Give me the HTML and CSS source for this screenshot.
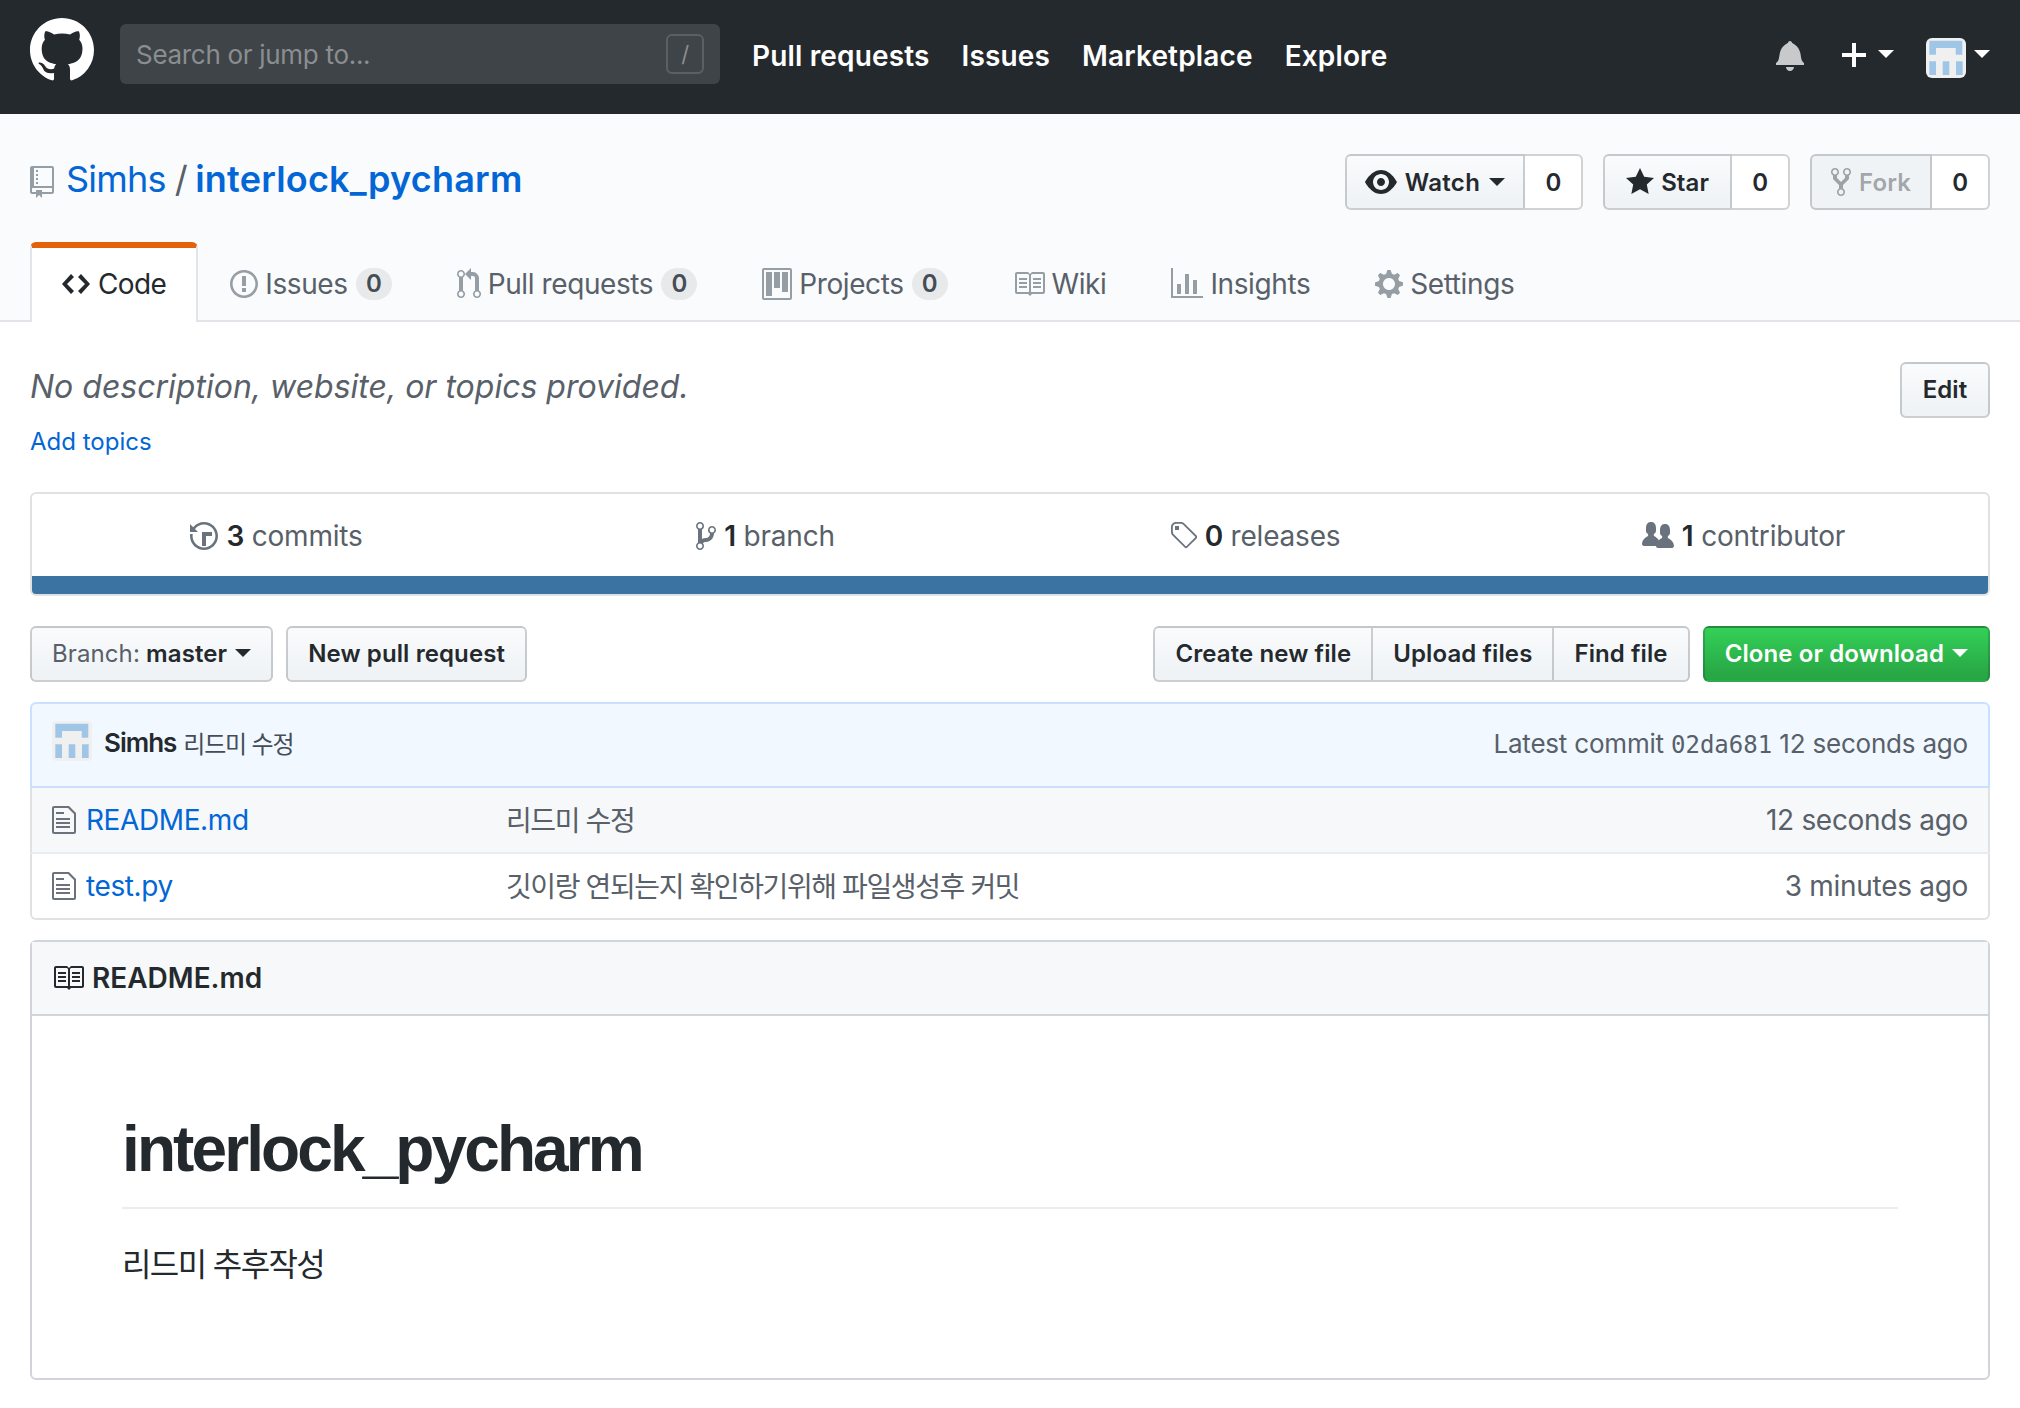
FILE: index.html
```html
<!DOCTYPE html>
<html lang="en">
<head>
    <meta charset="UTF-8">
    <meta name="viewport" content="width=device-width, initial-scale=1.0">
    <title>Simhs/interlock_pycharm</title>
    <link rel="stylesheet" href="styles.css">
</head>
<body>
    <svg class="sprite" xmlns="http://www.w3.org/2000/svg">
        <symbol id="i-mark" viewBox="0 0 16 16"><path d="M8 0C3.58 0 0 3.58 0 8c0 3.54 2.29 6.53 5.47 7.59.4.07.55-.17.55-.38 0-.19-.01-.82-.01-1.49-2.01.37-2.53-.49-2.69-.94-.09-.23-.48-.94-.82-1.13-.28-.15-.68-.52-.01-.53.63-.01 1.08.58 1.23.82.72 1.21 1.87.87 2.33.66.07-.52.28-.87.51-1.07-1.78-.2-3.64-.89-3.64-3.95 0-.87.31-1.59.82-2.15-.08-.2-.36-1.02.08-2.12 0 0 .67-.21 2.2.82.64-.18 1.32-.27 2-.27.68 0 1.36.09 2 .27 1.53-1.04 2.2-.82 2.2-.82.44 1.1.16 1.92.08 2.12.51.56.82 1.27.82 2.15 0 3.07-1.87 3.75-3.65 3.95.29.25.54.73.54 1.48 0 1.07-.01 1.93-.01 2.2 0 .21.15.46.55.38A8.013 8.013 0 0016 8c0-4.42-3.58-8-8-8z"/></symbol>
        <symbol id="i-repo" viewBox="0 0 12 16"><path d="M4 9H3V8h1v1zm0-3H3v1h1V6zm0-2H3v1h1V4zm0-2H3v1h1V2zm8-1v12c0 .55-.45 1-1 1H6v2l-1.5-1.5L3 16v-2H1c-.55 0-1-.45-1-1V1c0-.55.45-1 1-1h10c.55 0 1 .45 1 1zm-1 10H1v2h2v-1h3v1h5v-2zm0-10H2v9h9V1z"/></symbol>
        <symbol id="i-eye" viewBox="0 0 16 16"><path d="M8.06 2C3 2 0 8 0 8s3 6 8.06 6C13 14 16 8 16 8s-3-6-7.94-6zM8 12c-2.2 0-4-1.78-4-4 0-2.2 1.8-4 4-4 2.22 0 4 1.8 4 4 0 2.22-1.78 4-4 4zm2-4c0 1.11-.89 2-2 2-1.11 0-2-.89-2-2 0-1.11.89-2 2-2 1.11 0 2 .89 2 2z"/></symbol>
        <symbol id="i-star" viewBox="0 0 14 16"><path d="M14 6l-4.9-.64L7 1 4.9 5.36 0 6l3.6 3.26L2.67 14 7 11.67 11.33 14l-.93-4.74L14 6z"/></symbol>
        <symbol id="i-fork" viewBox="0 0 10 16"><path d="M8 1a1.993 1.993 0 00-1 3.72V6L5 8 3 6V4.72A1.993 1.993 0 002 1a1.993 1.993 0 00-1 3.72V6.5l3 3v1.78A1.993 1.993 0 005 15a1.993 1.993 0 001-3.72V9.5l3-3V4.72A1.993 1.993 0 008 1zM2 4.2C1.34 4.2.8 3.65.8 3c0-.65.55-1.2 1.2-1.2.65 0 1.2.55 1.2 1.2 0 .65-.55 1.2-1.2 1.2zm3 10c-.66 0-1.2-.55-1.2-1.2 0-.65.55-1.2 1.2-1.2.65 0 1.2.55 1.2 1.2 0 .65-.55 1.2-1.2 1.2zm3-10c-.66 0-1.2-.55-1.2-1.2 0-.65.55-1.2 1.2-1.2.65 0 1.2.55 1.2 1.2 0 .65-.55 1.2-1.2 1.2z"/></symbol>
        <symbol id="i-code" viewBox="0 0 14 16"><path d="M9.5 3L8 4.5 11.5 8 8 11.5 9.5 13 14 8 9.5 3zm-5 0L0 8l4.5 5L6 11.5 2.5 8 6 4.5 4.5 3z"/></symbol>
        <symbol id="i-issue" viewBox="0 0 14 16"><path d="M7 2.3c3.14 0 5.7 2.56 5.7 5.7s-2.56 5.7-5.7 5.7A5.71 5.71 0 011.3 8c0-3.14 2.56-5.7 5.7-5.7zM7 1C3.14 1 0 4.14 0 8s3.14 7 7 7 7-3.14 7-7-3.14-7-7-7zm1 3H6v5h2V4zm0 6H6v2h2v-2z"/></symbol>
        <symbol id="i-pr" viewBox="0 0 12 16"><path d="M11 11.28V5c-.03-.78-.34-1.47-.94-2.06C9.46 2.35 8.78 2.03 8 2H7V0L4 3l3 3V4h1c.27.02.48.11.69.31.21.2.3.42.31.69v6.28A1.993 1.993 0 0010 15a1.993 1.993 0 001-3.72zm-1 2.92c-.66 0-1.2-.55-1.2-1.2 0-.65.55-1.2 1.2-1.2.65 0 1.2.55 1.2 1.2 0 .65-.55 1.2-1.2 1.2zM4 3c0-1.11-.89-2-2-2a1.993 1.993 0 00-1 3.72v6.56A1.993 1.993 0 002 15a1.993 1.993 0 001-3.72V4.72c.59-.34 1-.98 1-1.72zm-.8 10c0 .66-.55 1.2-1.2 1.2-.65 0-1.2-.55-1.2-1.2 0-.65.55-1.2 1.2-1.2.65 0 1.2.55 1.2 1.2zM2 4.2C1.34 4.2.8 3.65.8 3c0-.65.55-1.2 1.2-1.2.65 0 1.2.55 1.2 1.2 0 .65-.55 1.2-1.2 1.2z"/></symbol>
        <symbol id="i-project" viewBox="0 0 15 16"><path fill-rule="evenodd" d="M10 12h3V2h-3v10zm-4-2h3V2H6v8zm-4 4h3V2H2v12zm-1 1h13V1H1v14zM14 0H1a1 1 0 00-1 1v14a1 1 0 001 1h13a1 1 0 001-1V1a1 1 0 00-1-1z"/></symbol>
        <symbol id="i-book" viewBox="0 0 16 16"><path d="M3 5h4v1H3V5zm0 3h4V7H3v1zm0 2h4V9H3v1zm11-5h-4v1h4V5zm0 2h-4v1h4V7zm0 2h-4v1h4V9zm2-6v9c0 .55-.45 1-1 1H9.5l-1 1-1-1H2c-.55 0-1-.45-1-1V3c0-.55.45-1 1-1h5.5l1 1 1-1H15c.55 0 1 .45 1 1zm-8 .5L7.5 3H2v9h6V3.5zm7-.5H9.5l-.5.5V12h6V3z"/></symbol>
        <symbol id="i-graph" viewBox="0 0 16 16"><path d="M16 14v1H0V0h1v14h15zM5 13H3V8h2v5zm4 0H7V3h2v10zm4 0h-2V6h2v7z"/></symbol>
        <symbol id="i-gear" viewBox="0 0 14 16"><path d="M14 8.77v-1.6l-1.94-.64-.45-1.09.88-1.84-1.13-1.13-1.81.91-1.09-.45-.69-1.92h-1.6l-.63 1.94-1.11.45-1.84-.88-1.13 1.13.91 1.81-.45 1.09L0 7.23v1.59l1.94.64.45 1.09-.88 1.84 1.13 1.13 1.81-.91 1.09.45.69 1.92h1.59l.63-1.94 1.11-.45 1.84.88 1.13-1.13-.92-1.81.47-1.09L14 8.75v.02zM7 11c-1.66 0-3-1.34-3-3s1.34-3 3-3 3 1.34 3 3-1.34 3-3 3z"/></symbol>
        <symbol id="i-history" viewBox="0 0 14 16"><path d="M8 13H6V6h5v2H8v5zM7 1C4.81 1 2.87 2.02 1.59 3.59L0 2v4h4L2.5 4.5C3.55 3.17 5.17 2.3 7 2.3c3.14 0 5.7 2.56 5.7 5.7s-2.56 5.7-5.7 5.7A5.71 5.71 0 011.3 8c0-.34.03-.67.09-1H.08C.03 7.33 0 7.66 0 8c0 3.86 3.14 7 7 7s7-3.14 7-7-3.14-7-7-7z"/></symbol>
        <symbol id="i-branch" viewBox="0 0 10 16"><path d="M10 5c0-1.11-.89-2-2-2a1.993 1.993 0 00-1 3.72v.3c-.02.52-.23.98-.63 1.38-.4.4-.86.61-1.38.63-.83.02-1.48.16-2 .45V4.72a1.993 1.993 0 00-1-3.72C.88 1 0 1.89 0 3a2 2 0 001 1.72v6.56c-.59.35-1 .99-1 1.72 0 1.11.89 2 2 2 1.11 0 2-.89 2-2 0-.53-.2-1-.53-1.36.09-.06.48-.41.59-.47.25-.11.56-.17.94-.17 1.05-.05 1.95-.45 2.75-1.25S8.95 7.77 9 6.73h-.02C9.59 6.37 10 5.73 10 5zM2 1.8c.66 0 1.2.55 1.2 1.2 0 .65-.55 1.2-1.2 1.2C1.35 4.2.8 3.65.8 3c0-.65.55-1.2 1.2-1.2zm0 12.41c-.66 0-1.2-.55-1.2-1.2 0-.65.55-1.2 1.2-1.2.65 0 1.2.55 1.2 1.2 0 .65-.55 1.2-1.2 1.2zm6-8c-.66 0-1.2-.55-1.2-1.2 0-.65.55-1.2 1.2-1.2.65 0 1.2.55 1.2 1.2 0 .65-.55 1.2-1.2 1.2z"/></symbol>
        <symbol id="i-tag" viewBox="0 0 14 16"><path d="M7.73 1.73C7.26 1.26 6.62 1 5.96 1H3.5C2.13 1 1 2.13 1 3.5v2.47c0 .66.27 1.3.73 1.77l6.06 6.06c.39.39 1.02.39 1.41 0l4.59-4.59a.996.996 0 000-1.41L7.73 1.73zM2.38 7.09c-.31-.3-.47-.7-.47-1.13V3.5c0-.88.72-1.59 1.59-1.59h2.47c.42 0 .83.16 1.13.47l6.14 6.13-4.73 4.73-6.13-6.15zM3.01 3h2v2H3V3h.01z"/></symbol>
        <symbol id="i-org" viewBox="0 0 16 16"><path d="M16 12.999c0 .439-.45 1-1 1H7.995c-.539 0-.994-.447-.995-.999H1c-.54 0-1-.561-1-1 0-2.634 3-4 3-4s.229-.409 0-1c-.841-.621-1.058-.59-1-3 .058-2.419 1.367-3 2.5-3s2.442.58 2.5 3c.058 2.41-.159 2.379-1 3-.229.59 0 1 0 1s1.549.711 2.42 2.088C9.196 9.369 10 8.999 10 8.999s.229-.409 0-1c-.841-.62-1.058-.59-1-3 .058-2.419 1.367-3 2.5-3s2.437.581 2.495 3c.059 2.41-.158 2.38-1 3-.229.59 0 1 0 1s3.005 1.366 3.005 4z"/></symbol>
        <symbol id="i-file" viewBox="0 0 12 16"><path d="M6 5H2V4h4v1zM2 8h7V7H2v1zm0 2h7V9H2v1zm0 2h7v-1H2v1zm10-7.5V14c0 .55-.45 1-1 1H1c-.55 0-1-.45-1-1V2c0-.55.45-1 1-1h7.5L12 4.5zM11 5L8 2H1v12h10V5z"/></symbol>
        <symbol id="i-bell" viewBox="0 0 14 16"><path d="M14 12v1H0v-1l.73-.58c.77-.77.81-2.55 1.19-4.42C2.69 3.23 6 2 6 2c0-.55.45-1 1-1s1 .45 1 1c0 0 3.39 1.23 4.16 5 .38 1.88.42 3.66 1.19 4.42l.66.58H14zm-7 4c1.11 0 2-.89 2-2H5c0 1.11.89 2 2 2z"/></symbol>
        <symbol id="i-plus" viewBox="0 0 12 16"><path d="M12 9H7v5H5V9H0V7h5V2h2v5h5v2z"/></symbol>
        <symbol id="i-avatar" viewBox="0 0 40 40">
            <rect width="40" height="40" fill="#f0f0f0"/>
            <path fill="#9fc6e7" d="M3.3 2.7h33v14h-6.6V10H10v6.7H3.3zM3.3 23.3H10V37H3.3zM16.7 23.3h6.6V37h-6.6zM30 23.3h6.7V37H30z"/>
        </symbol>
    </svg>

    <header class="topbar">
        <svg class="logo"><use href="#i-mark"/></svg>
        <div class="search">
            <span class="search-hint">Search or jump to...</span>
            <span class="slash">/</span>
        </div>
        <nav class="topnav">
            <a href="#">Pull requests</a>
            <a href="#">Issues</a>
            <a href="#">Marketplace</a>
            <a href="#">Explore</a>
        </nav>
        <div class="topright">
            <svg class="bell"><use href="#i-bell"/></svg>
            <svg class="plus"><use href="#i-plus"/></svg>
            <span class="caret caret-white plus-caret"></span>
            <svg class="avatar"><use href="#i-avatar"/></svg>
            <span class="caret caret-white avatar-caret"></span>
        </div>
    </header>

    <section class="repohead">
        <div class="repo-row">
            <h1 class="repo-title">
                <svg class="ic-repo"><use href="#i-repo"/></svg>
                <a href="#" class="repo-owner">Simhs</a>
                <span class="sep">/</span>
                <a href="#" class="repo-name">interlock_pycharm</a>
            </h1>
            <div class="actions">
                <div class="social">
                    <a class="social-btn" href="#"><svg class="ic-eye"><use href="#i-eye"/></svg>Watch<span class="caret"></span></a>
                    <span class="social-count">0</span>
                </div>
                <div class="social">
                    <a class="social-btn star-btn" href="#"><svg class="ic-star"><use href="#i-star"/></svg>Star</a>
                    <span class="social-count">0</span>
                </div>
                <div class="social">
                    <a class="social-btn is-disabled" href="#"><svg class="ic-fork"><use href="#i-fork"/></svg>Fork</a>
                    <span class="social-count">0</span>
                </div>
            </div>
        </div>
        <nav class="tabs">
            <a class="tab is-selected" href="#"><svg class="ic-code"><use href="#i-code"/></svg>Code</a>
            <a class="tab" href="#"><svg class="ic-14"><use href="#i-issue"/></svg>Issues<span class="counter">0</span></a>
            <a class="tab" href="#"><svg class="ic-12"><use href="#i-pr"/></svg>Pull requests<span class="counter">0</span></a>
            <a class="tab" href="#"><svg class="ic-15"><use href="#i-project"/></svg>Projects<span class="counter">0</span></a>
            <a class="tab" href="#"><svg class="ic-16"><use href="#i-book"/></svg>Wiki</a>
            <a class="tab" href="#"><svg class="ic-16"><use href="#i-graph"/></svg>Insights</a>
            <a class="tab" href="#"><svg class="ic-14"><use href="#i-gear"/></svg>Settings</a>
        </nav>
    </section>

    <main class="container">
        <div class="about">
            <em class="description">No description, website, or topics provided.</em>
            <a class="btn btn-edit" href="#">Edit</a>
        </div>
        <a class="add-topics" href="#">Add topics</a>

        <div class="numbers">
            <ul class="summary">
                <li><svg class="ic-14"><use href="#i-history"/></svg><span><b>3</b> commits</span></li>
                <li><svg class="ic-10"><use href="#i-branch"/></svg><span><b>1</b> branch</span></li>
                <li><svg class="ic-14"><use href="#i-tag"/></svg><span><b>0</b> releases</span></li>
                <li><svg class="ic-16"><use href="#i-org"/></svg><span><b>1</b> contributor</span></li>
            </ul>
            <div class="langbar"></div>
        </div>

        <div class="filenav">
            <a class="btn" href="#"><span class="muted">Branch:</span>&nbsp;master<span class="caret"></span></a>
            <a class="btn" href="#">New pull request</a>
            <div class="filenav-right">
                <div class="btn-group">
                    <a class="btn" href="#">Create new file</a>
                    <a class="btn" href="#">Upload files</a>
                    <a class="btn" href="#">Find file</a>
                </div>
                <a class="btn btn-green" href="#">Clone or download<span class="caret caret-white"></span></a>
            </div>
        </div>

        <div class="files">
            <div class="tease">
                <svg class="tease-avatar"><use href="#i-avatar"/></svg>
                <b>Simhs</b>
                <span class="tease-msg">리드미 수정</span>
                <span class="tease-right">Latest commit <code>02da681</code> 12 seconds ago</span>
            </div>
            <div class="file-row shaded">
                <svg class="ic-file"><use href="#i-file"/></svg>
                <a class="file-name" href="#">README.md</a>
                <span class="file-msg">리드미 수정</span>
                <span class="file-age">12 seconds ago</span>
            </div>
            <div class="file-row">
                <svg class="ic-file"><use href="#i-file"/></svg>
                <a class="file-name" href="#">test.py</a>
                <span class="file-msg">깃이랑 연되는지 확인하기위해 파일생성후 커밋</span>
                <span class="file-age">3 minutes ago</span>
            </div>
        </div>

        <article class="readme">
            <h3 class="readme-head"><svg class="ic-16"><use href="#i-book"/></svg>README.md</h3>
            <div class="readme-body">
                <h1>interlock_pycharm</h1>
                <p>리드미 추후작성</p>
            </div>
        </article>
    </main>
</body>
</html>
```

FILE: styles.css
```css
* {
    box-sizing: border-box;
}

body {
    margin: 0;
    background: #fff;
    color: #24292e;
    font-family: Inter, "Noto Sans CJK KR", sans-serif;
    font-size: 28px;
    letter-spacing: -0.4px;
}

a {
    color: #0366d6;
    text-decoration: none;
}

svg {
    fill: currentColor;
    flex: none;
}

.sprite {
    display: none;
}

.caret {
    display: inline-block;
    width: 0;
    height: 0;
    margin-left: 10px;
    border-style: solid;
    border-width: 8px 8px 0;
    border-color: #24292e transparent transparent;
}

.caret-white {
    border-top-color: #fff;
}

/* top bar */
.topbar {
    display: flex;
    align-items: center;
    height: 114px;
    padding: 0 30px 6px;
    background: #24292e;
}

.logo {
    width: 64px;
    height: 64px;
    margin-top: -8px;
    color: #fff;
}

.search {
    display: flex;
    align-items: center;
    justify-content: space-between;
    width: 600px;
    height: 60px;
    margin-left: 26px;
    padding: 0 16px;
    border-radius: 6px;
    background: #3f4448;
    color: #8b8e90;
}

.search-hint {
    font-size: 26px;
    letter-spacing: -0.3px;
}

.slash {
    width: 38px;
    height: 40px;
    border: 2px solid #5c6064;
    border-radius: 6px;
    color: #8b8e90;
    font-size: 22px;
    line-height: 36px;
    text-align: center;
}

.topnav {
    display: flex;
    gap: 32px;
    margin-top: 4px;
    margin-left: 32px;
}

.topnav a {
    color: #fff;
    font-weight: 600;
    letter-spacing: 0.15px;
}

.topright {
    display: flex;
    align-items: center;
    margin-top: 8px;
    margin-left: auto;
}

.bell {
    width: 28px;
    height: 32px;
    margin-top: -6px;
    color: #c8c9cb;
}

.plus {
    width: 24px;
    height: 32px;
    margin-top: -6px;
    margin-left: 38px;
    color: #fff;
}

.plus-caret {
    margin-top: -8px;
    margin-left: 12px;
}

.avatar {
    width: 40px;
    height: 40px;
    margin-left: 32px;
    border-radius: 6px;
}

.avatar-caret {
    margin-top: -8px;
    margin-left: 8px;
}

/* repo head */
.repohead {
    padding-top: 40px;
    background: #fafbfc;
}

.repo-row {
    display: flex;
    align-items: center;
    justify-content: space-between;
    height: 56px;
    padding: 0 30px;
}

.repo-title {
    display: flex;
    align-items: center;
    margin: -6px 0 0;
    font-size: 36px;
    font-weight: 400;
}

.ic-repo {
    width: 24px;
    height: 32px;
    margin-top: 6px;
    margin-right: 12px;
    color: #959da5;
}

.repo-owner {
    letter-spacing: -0.8px;
}

.sep {
    margin: 0 8px 0 9px;
    color: #586069;
}

.repo-name {
    font-weight: 600;
    letter-spacing: 0.2px;
}

.actions {
    display: flex;
    gap: 20px;
}

.social {
    display: flex;
    height: 56px;
    font-size: 24px;
    font-weight: 600;
}

.social-btn {
    display: flex;
    align-items: center;
    padding: 0 18px;
    border: 2px solid rgba(27, 31, 35, .2);
    border-radius: 6px 0 0 6px;
    background: linear-gradient(#fafbfc, #eff3f6 90%);
    color: #24292e;
    letter-spacing: 0.3px;
}

.star-btn {
    padding: 0 21px;
    letter-spacing: 0.1px;
}

.is-disabled {
    padding: 0 19px;
    background: #eff3f6;
    color: rgba(36, 41, 46, .4);
    letter-spacing: 0.1px;
}

.social-count {
    display: flex;
    align-items: center;
    justify-content: center;
    width: 58px;
    border: 2px solid rgba(27, 31, 35, .2);
    border-left: 0;
    border-radius: 0 6px 6px 0;
    background: #fff;
}

.ic-eye {
    width: 32px;
    height: 32px;
    margin-right: 8px;
}

.ic-star {
    width: 28px;
    height: 32px;
    margin-right: 7px;
}

.ic-fork {
    width: 20px;
    height: 32px;
    margin-right: 8px;
}

.social-btn .caret {
    margin-left: 9px;
}

.tabs {
    display: flex;
    height: 80px;
    margin-top: 32px;
    padding: 0 30px;
    border-bottom: 2px solid #e1e4e8;
}

.tab {
    display: flex;
    align-items: center;
    gap: 7px;
    height: 80px;
    padding: 4px 33px 0 32px;
    color: #586069;
}

.tab svg {
    color: #959da5;
}

.tab.is-selected {
    gap: 8px;
    padding: 0 30px 2px;
    border: 2px solid #e1e4e8;
    border-top: 6px solid #e36209;
    border-bottom: 0;
    border-radius: 6px 6px 0 0;
    background: #fff;
    color: #24292e;
    letter-spacing: -0.6px;
}

.tab.is-selected svg {
    color: #24292e;
}

.ic-code, .ic-14 {
    width: 28px;
    height: 32px;
}

.ic-10 {
    width: 20px;
    height: 32px;
}

.ic-12 {
    width: 24px;
    height: 32px;
}

.ic-15 {
    width: 30px;
    height: 32px;
}

.ic-16 {
    width: 32px;
    height: 32px;
}

.counter {
    min-width: 36px;
    height: 32px;
    margin-left: 1px;
    border-radius: 40px;
    background: rgba(27, 31, 35, .08);
    color: #444d56;
    font-size: 24px;
    font-weight: 600;
    line-height: 32px;
    text-align: center;
}

/* main column */
.container {
    padding: 0 30px 28px;
}

.about {
    display: flex;
    align-items: center;
    justify-content: space-between;
    height: 56px;
    margin-top: 40px;
}

.description {
    margin-bottom: 8px;
    color: #586069;
    font-size: 32px;
    letter-spacing: 0;
}

.add-topics {
    display: block;
    margin-top: 7px;
    margin-bottom: -1px;
    font-size: 24px;
    line-height: 34px;
    letter-spacing: 0;
}

.btn {
    display: inline-flex;
    align-items: center;
    height: 56px;
    padding: 0 20px 2px;
    border: 2px solid rgba(27, 31, 35, .2);
    border-radius: 6px;
    background: linear-gradient(#fafbfc, #eff3f6 90%);
    color: #24292e;
    font-size: 24px;
    font-weight: 600;
    letter-spacing: 0.1px;
}

.btn .caret {
    margin-left: 8px;
}

.btn-edit {
    width: 90px;
    justify-content: center;
    padding: 0 0 2px;
}

.numbers {
    margin-top: 34px;
    border: 2px solid #dfe2e5;
    border-radius: 6px;
    overflow: hidden;
}

.summary {
    display: grid;
    grid-template-columns: repeat(4, 1fr);
    height: 82px;
    margin: 0;
    padding: 2px 0 0;
    list-style: none;
    color: #586069;
    letter-spacing: -0.2px;
}

.summary li {
    display: flex;
    align-items: center;
    justify-content: center;
    gap: 8px;
}

.summary svg {
    color: #6a737d;
}

.summary b {
    color: #24292e;
    font-weight: 600;
}

.langbar {
    height: 18px;
    background: #3b73a3;
}

.filenav {
    display: flex;
    gap: 13px;
    margin-top: 30px;
}

.muted {
    color: #586069;
    font-weight: 400;
}

.filenav-right {
    display: flex;
    gap: 13px;
    margin-left: auto;
}

.btn-group {
    display: flex;
}

.btn-group .btn {
    border-radius: 0;
    margin-left: -2px;
}

.btn-group .btn:first-child {
    border-radius: 6px 0 0 6px;
    margin-left: 0;
}

.btn-group .btn:last-child {
    border-radius: 0 6px 6px 0;
}

.btn-green {
    background: linear-gradient(#34d058, #28a745 90%);
    color: #fff;
}

.files {
    margin-top: 20px;
}

.tease {
    display: flex;
    align-items: center;
    height: 86px;
    padding: 0 20px 6px;
    border: 2px solid #c8e1ff;
    border-radius: 6px 6px 0 0;
    background: #f1f8ff;
    font-size: 26px;
}

.tease b {
    margin-left: 12px;
    font-weight: 600;
    letter-spacing: -1px;
}

.tease-avatar {
    width: 40px;
    height: 40px;
    margin-top: -2px;
    border-radius: 4px;
}

.tease-msg {
    margin-left: 7px;
    color: #444d56;
    font-size: 24px;
    letter-spacing: -1.2px;
}

.tease-right {
    margin-top: 2px;
    margin-left: auto;
    color: #586069;
    letter-spacing: -0.2px;
}

.tease-right code {
    font-family: "DejaVu Sans Mono", monospace;
    font-size: 24px;
    letter-spacing: 0;
}

.file-row {
    display: flex;
    align-items: center;
    height: 66px;
    padding: 0 20px;
    border: 2px solid #dfe2e5;
    border-width: 0 2px 2px;
    border-bottom-color: #eaecef;
}

.file-row:last-child {
    border-bottom-color: #dfe2e5;
    border-radius: 0 0 6px 6px;
}

.shaded {
    background: #f6f8fa;
}

.ic-file {
    width: 24px;
    height: 32px;
    color: #6a737d;
}

.file-name {
    width: 420px;
    margin-left: 10px;
}

.file-msg {
    margin-bottom: 2px;
    color: #586069;
    letter-spacing: -1.4px;
}

.file-age {
    margin-left: auto;
    color: #586069;
    letter-spacing: -0.3px;
}

.readme {
    margin-top: 20px;
    border: 2px solid #d1d5da;
    border-radius: 6px;
}

.readme-head {
    display: flex;
    align-items: center;
    gap: 8px;
    height: 74px;
    margin: 0;
    padding: 0 20px;
    border-bottom: 2px solid #d1d5da;
    background: #f6f8fa;
    font-size: 28px;
    font-weight: 600;
    letter-spacing: 0;
}

.readme-body {
    height: 362px;
    padding: 94px 90px 0;
    font-family: "Liberation Sans", "Noto Sans CJK KR", sans-serif;
    letter-spacing: 0;
}

.readme-body h1 {
    margin: 0;
    padding-bottom: 19px;
    border-bottom: 2px solid #eaecef;
    font-size: 64px;
    line-height: 78px;
    font-weight: 700;
    letter-spacing: -2.9px;
}

.readme-body p {
    margin: 34px 0 0;
    font-size: 32px;
    line-height: 44px;
    letter-spacing: -1.6px;
}
```
